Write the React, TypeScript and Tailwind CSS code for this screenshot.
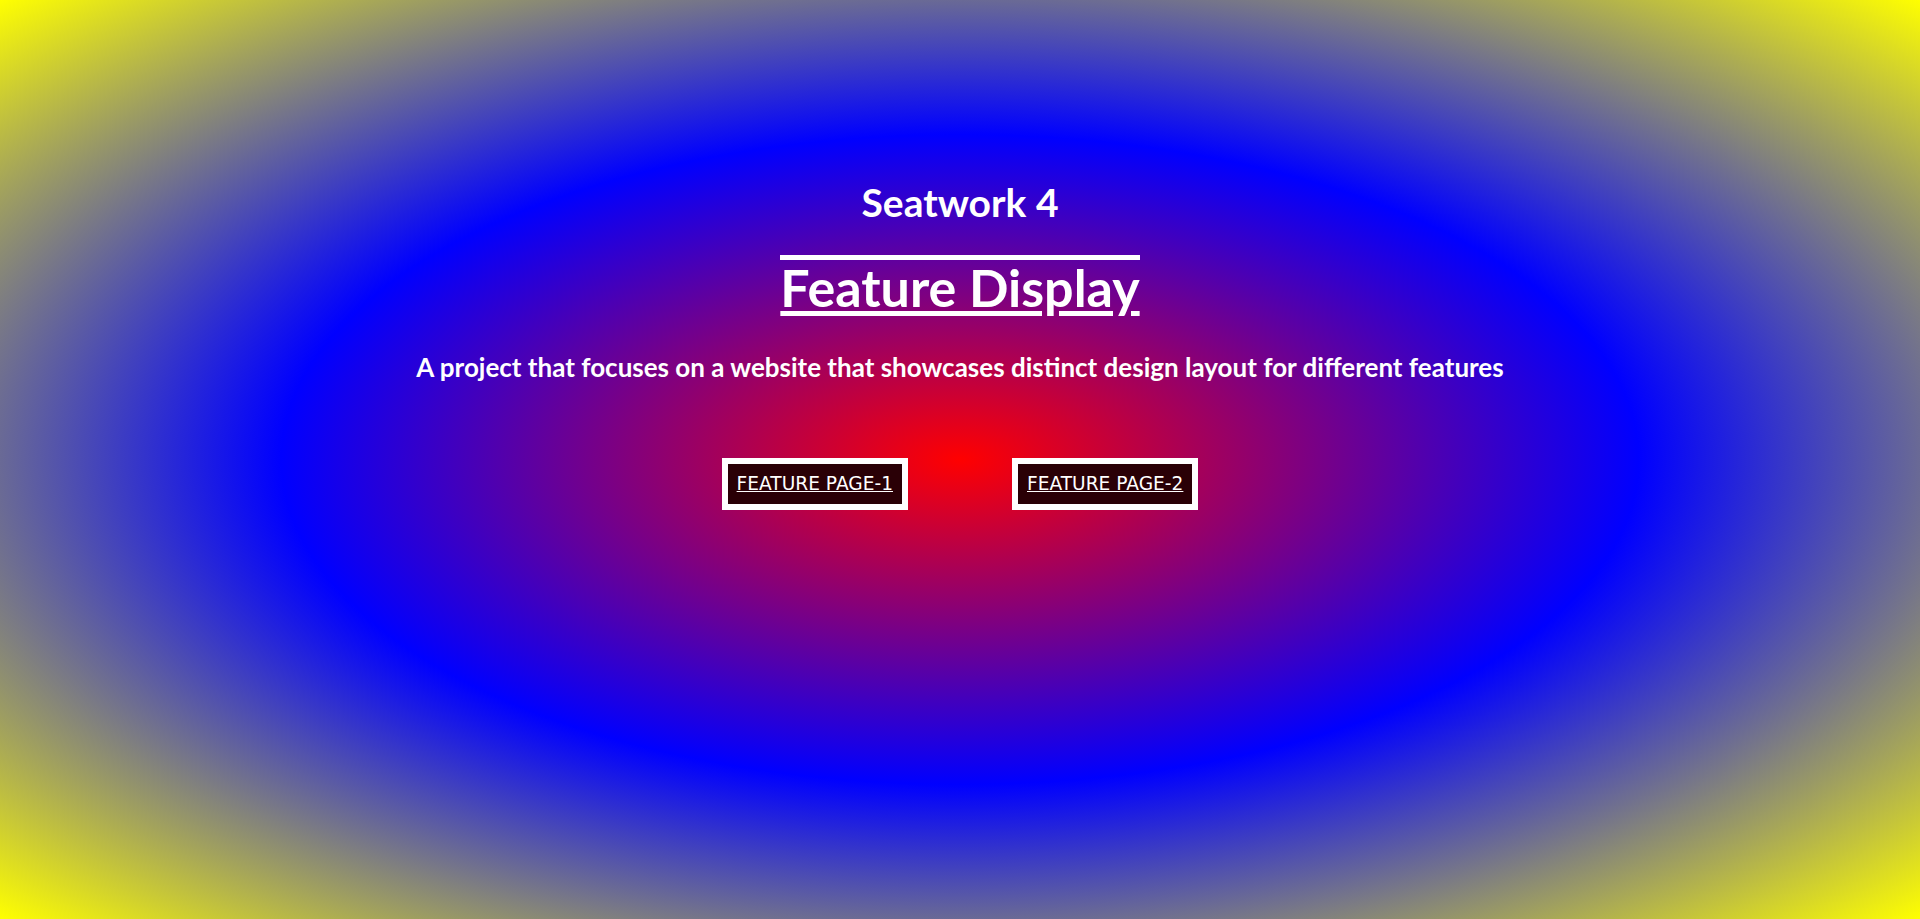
import React from "react";

const App = () => {
  return (
    <div className="min-h-screen w-full bg-[radial-gradient(red,blue,yellow)] flex flex-col items-center text-white">
      <h1 className="mt-[180px] text-[39px] leading-[44px] font-bold font-['Lato',sans-serif]">
        Seatwork 4
      </h1>
      <h2 className="mt-[31px] border-t-[5px] border-white pt-0 text-[52px] leading-[54px] font-bold underline decoration-[5px] underline-offset-[4px] font-['Lato',sans-serif]">
        Feature Display
      </h2>
      <p className="mt-[38px] text-[26px] leading-[30px] font-bold font-['Lato',sans-serif]">
        A project that focuses on a website that showcases distinct design layout for different features
      </p>
      <div className="mt-[76px] flex gap-[104px]">
        <a
          href="#"
          className="block border-[6px] border-white bg-[#2a0006] px-[9px] py-[9px] text-[18.6px] leading-[22px] underline font-['DejaVu_Sans','Verdana',sans-serif]"
        >
          FEATURE PAGE-1
        </a>
        <a
          href="#"
          className="block border-[6px] border-white bg-[#2a0006] px-[9px] py-[9px] text-[18.6px] leading-[22px] underline font-['DejaVu_Sans','Verdana',sans-serif]"
        >
          FEATURE PAGE-2
        </a>
      </div>
    </div>
  );
};

export default App;
